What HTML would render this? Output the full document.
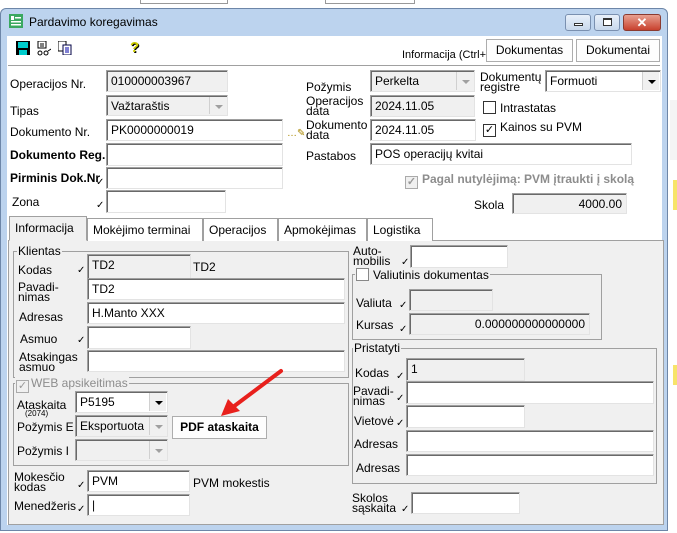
<!DOCTYPE html>
<html><head><meta charset="utf-8"><style>
*{box-sizing:border-box;margin:0;padding:0}
body{width:677px;height:533px;overflow:hidden;background:#fff;font-family:"Liberation Sans",Arial,sans-serif;font-size:12px;color:#000;position:relative}
.a{position:absolute;white-space:nowrap}
.in{position:absolute;background:#fff;border:1px solid #a0a0a0;border-right-color:#e3e3e3;border-bottom-color:#e3e3e3;box-shadow:inset 1px 1px 0 #696969;padding:2px 4px;font-size:12px;line-height:16px}
.g{background:#f0f0f0}
.dd{position:absolute;right:1px;top:1px;bottom:1px;width:17px;background:#f0f0f0;border-left:1px solid #d0d0d0}
.dd:after{content:"";position:absolute;left:5px;top:8px;border-left:4px solid transparent;border-right:4px solid transparent;border-top:4px solid #000}
.dd.d:after{border-top-color:#a0a0a0}
.l2{line-height:10px;font-size:12px}
.ck{position:absolute;font-size:10px}
.btn{position:absolute;background:#fdfdfd;border:1px solid #adadad;text-align:center;line-height:21px;font-size:12px}
.grp{position:absolute;border:1px solid #a0a0a0}
.gt{position:absolute;background:#f0f0f0;padding:0 1px}
.tab{position:absolute;top:218px;height:23px;border:1px solid #a0a0a0;border-bottom:none;background:#f0f0f0;line-height:22px;padding:0 5px;font-size:12px}
.cb{display:inline-block;width:13px;height:13px;border:1px solid #333;background:#fff;vertical-align:-2px;margin-right:4px;position:relative}
</style></head><body>
<div class="a" style="left:140px;top:0;width:88px;height:4px;border:1px solid #999;border-top:none"></div>
<div class="a" style="left:325px;top:0;width:90px;height:4px;border:1px solid #999;border-top:none"></div>
<!-- window frame -->
<div class="a" style="left:0;top:8px;width:668px;height:523px;background:#bcd3ee;border:1px solid #6d86a8;border-radius:6px 6px 0 0"></div>
<div class="a" style="left:668px;top:0;width:9px;height:533px;background:#fff"></div>
<div class="a" style="left:670px;top:100px;width:7px;height:60px;background:#f4f4f4"></div>
<div class="a" style="left:673px;top:180px;width:4px;height:30px;background:#f7e46a"></div>
<div class="a" style="left:673px;top:365px;width:4px;height:20px;background:#f7e46a"></div>
<svg class="a" style="left:9px;top:14px" width="14" height="14"><rect width="14" height="14" fill="#3aa860"/><rect x="2" y="2" width="3" height="4" fill="#fff"/><rect x="6" y="3" width="6" height="1.5" fill="#fff"/><rect x="2" y="7" width="10" height="1.5" fill="#fff"/><rect x="2" y="10" width="10" height="1.5" fill="#fff"/></svg>
<div class="a" style="left:29px;top:15px;font-size:12px">Pardavimo koregavimas</div>
<div class="a" style="left:565px;top:14px;width:26px;height:17px;border:1px solid #7a90b0;border-radius:3px;background:linear-gradient(#e8f0fa,#c8d8ec)"><div style="position:absolute;left:8px;top:8px;width:9px;height:3px;border:1px solid #333;background:#fff"></div></div>
<div class="a" style="left:594px;top:14px;width:26px;height:17px;border:1px solid #7a90b0;border-radius:3px;background:linear-gradient(#e8f0fa,#c8d8ec)"><div style="position:absolute;left:8px;top:3px;width:9px;height:8px;border:1px solid #333;border-top-width:2px;background:#fff"></div></div>
<div class="a" style="left:623px;top:14px;width:38px;height:17px;border:1px solid #8a3a30;border-radius:3px;background:linear-gradient(#e8a090,#c8412e);color:#fff;font-weight:bold;text-align:center;line-height:15px;font-size:13px">✕</div>
<!-- client area -->
<div class="a" style="left:7px;top:36px;width:655px;height:489px;background:#fff"></div>
<svg class="a" style="left:16px;top:41px" width="14" height="14"><rect width="14" height="14" fill="#000"/><rect x="2" y="1" width="10" height="6" fill="#0cc"/><rect x="3" y="9" width="8" height="5" fill="#0cc"/></svg>
<svg class="a" style="left:37px;top:41px" width="14" height="15"><rect x="1" y="0" width="8" height="7" fill="#fff" stroke="#000"/><path d="M3 3h4M3 5h4" stroke="#000"/><circle cx="3" cy="12" r="2" fill="none" stroke="#000"/><circle cx="9" cy="12" r="2" fill="none" stroke="#000"/><path d="M11 10l3-2" stroke="#000"/></svg>
<svg class="a" style="left:58px;top:41px" width="14" height="14"><rect x="0" y="0" width="8" height="10" fill="#fff" stroke="#000"/><rect x="5" y="4" width="8" height="10" fill="#fff" stroke="#004"/><path d="M7 7h4M7 9h4M7 11h4" stroke="#00a"/></svg>
<div class="a" style="left:130px;top:39px;font-weight:bold;color:#cc0;font-size:15px;text-shadow:1px 1px 0 #000">?</div>
<div class="a" style="left:402px;top:49px;font-size:11px">Informacija (Ctrl+J</div>
<div class="btn" style="left:486px;top:39px;width:87px;height:23px">Dokumentas</div>
<div class="btn" style="left:576px;top:39px;width:84px;height:23px">Dokumentai</div>
<div class="a" style="left:8px;top:65px;width:652px;height:1px;background:#a0a0a0"></div>

<div class="a" style="left:10px;top:77px">Operacijos Nr.</div>
<div class="in g" style="left:106px;top:70px;width:122px;height:22px">010000003967</div>
<div class="a" style="left:10px;top:104px">Tipas</div>
<div class="in g" style="left:106px;top:95px;width:122px;height:21px">Važtaraštis<div class="dd d"></div></div>
<div class="a" style="left:10px;top:125px">Dokumento Nr.</div>
<div class="in" style="left:106px;top:119px;width:177px;height:22px">PK0000000019</div>
<div class="a" style="left:287px;top:128px;font-size:10px;color:#a80">…✎</div>
<div class="a" style="left:10px;top:148px;font-weight:bold">Dokumento Reg.</div>
<div class="in" style="left:106px;top:143px;width:177px;height:23px"></div>
<div class="a" style="left:10px;top:171px;font-weight:bold">Pirminis Dok.Nr</div>
<div class="ck" style="left:96px;top:177px">✓</div>
<div class="in" style="left:106px;top:167px;width:177px;height:22px"></div>
<div class="a" style="left:12px;top:195px">Zona</div>
<div class="ck" style="left:96px;top:200px">✓</div>
<div class="in" style="left:106px;top:190px;width:120px;height:23px"></div>

<div class="a" style="left:306px;top:80px">Požymis</div>
<div class="in g" style="left:370px;top:70px;width:105px;height:22px">Perkelta<div class="dd d"></div></div>
<div class="a l2" style="left:306px;top:96px">Operacijos<br>data</div>
<div class="in g" style="left:370px;top:95px;width:105px;height:22px">2024.11.05</div>
<div class="a l2" style="left:306px;top:120px">Dokumento<br>data</div>
<div class="in" style="left:370px;top:119px;width:106px;height:22px">2024.11.05</div>
<div class="a" style="left:306px;top:149px">Pastabos</div>
<div class="in" style="left:370px;top:143px;width:262px;height:22px">POS operacijų kvitai</div>
<div class="a l2" style="left:480px;top:72px">Dokumentų<br>registre</div>
<div class="in" style="left:545px;top:70px;width:116px;height:22px">Formuoti<div class="dd"></div></div>
<div class="a" style="left:483px;top:101px"><span class="cb"></span>Intrastatas</div>
<div class="a" style="left:483px;top:120px"><span class="cb" style="text-align:center;font-size:11px;line-height:11px">✓</span>Kainos su PVM</div>
<div class="a" style="left:405px;top:172px;font-weight:bold;color:#8d8d8d"><span class="cb" style="border-color:#aaa;background:#f0f0f0;color:#999;text-align:center;font-size:11px;line-height:11px">✓</span>Pagal nutylėjimą: PVM įtraukti į skolą</div>
<div class="a" style="left:474px;top:198px">Skola</div>
<div class="in g" style="left:512px;top:193px;width:115px;height:21px;text-align:right">4000.00</div>

<!-- tabs -->
<div class="a" style="left:8px;top:240px;width:656px;height:285px;background:#f0f0f0;border:1px solid #a0a0a0"></div>
<div class="tab" style="left:9px;top:216px;height:25px;width:78px;border-bottom:1px solid #f0f0f0;background:#f0f0f0;z-index:2">Informacija</div>
<div class="tab" style="left:87px;width:116px;background:#fff">Mokėjimo terminai</div>
<div class="tab" style="left:203px;width:75px;background:#fff">Operacijos</div>
<div class="tab" style="left:278px;width:89px;background:#fff">Apmokėjimas</div>
<div class="tab" style="left:367px;width:66px;background:#fff">Logistika</div>

<div class="grp" style="left:13px;top:251px;width:336px;height:127px"></div>
<div class="gt" style="left:17px;top:244px">Klientas</div>
<div class="a" style="left:18px;top:263px">Kodas</div><div class="ck" style="left:77px;top:265px">✓</div>
<div class="in g" style="left:87px;top:254px;width:104px;height:25px">TD2</div>
<div class="a" style="left:193px;top:260px">TD2</div>
<div class="a l2" style="left:18px;top:282px">Pavadi-<br>nimas</div>
<div class="in" style="left:87px;top:278px;width:258px;height:22px">TD2</div>
<div class="a" style="left:19px;top:310px">Adresas</div>
<div class="in" style="left:87px;top:302px;width:258px;height:22px">H.Manto XXX</div>
<div class="a" style="left:20px;top:332px">Asmuo</div><div class="ck" style="left:77px;top:335px">✓</div>
<div class="in" style="left:87px;top:326px;width:104px;height:23px"></div>
<div class="a l2" style="left:19px;top:352px">Atsakingas<br>asmuo</div>
<div class="in" style="left:87px;top:350px;width:258px;height:22px"></div>

<div class="grp" style="left:13px;top:383px;width:336px;height:83px"></div>
<div class="gt" style="left:15px;top:376px;color:#8d8d8d"><span class="cb" style="border-color:#aaa;background:#f0f0f0;color:#999;text-align:center;font-size:11px;line-height:11px;margin-right:2px">✓</span>WEB apsikeitimas</div>
<div class="a" style="left:17px;top:398px">Ataskaita</div>
<div class="a" style="left:25px;top:409px;font-size:8px">(2074)</div>
<div class="in" style="left:75px;top:391px;width:93px;height:22px">P5195<div class="dd"></div></div>
<div class="a" style="left:17px;top:420px">Požymis E</div>
<div class="in g" style="left:75px;top:415px;width:93px;height:22px">Eksportuota<div class="dd d"></div></div>
<div class="btn" style="left:172px;top:416px;width:95px;height:23px;font-weight:bold">PDF ataskaita</div>
<div class="a" style="left:17px;top:444px">Požymis I</div>
<div class="in g" style="left:75px;top:439px;width:93px;height:22px"><div class="dd d"></div></div>

<div class="a l2" style="left:14px;top:472px">Mokesčio<br>kodas</div><div class="ck" style="left:77px;top:480px">✓</div>
<div class="in" style="left:87px;top:470px;width:103px;height:22px">PVM</div>
<div class="a" style="left:193px;top:476px">PVM mokestis</div>
<div class="a" style="left:14px;top:499px">Menedžeris</div><div class="ck" style="left:77px;top:504px">✓</div>
<div class="in" style="left:87px;top:494px;width:103px;height:22px">|</div>

<div class="a l2" style="left:353px;top:246px">Auto-<br>mobilis</div><div class="ck" style="left:401px;top:257px">✓</div>
<div class="in" style="left:410px;top:245px;width:98px;height:23px"></div>
<div class="grp" style="left:352px;top:274px;width:250px;height:66px"></div>
<div class="gt" style="left:355px;top:268px"><span class="cb" style="border-color:#888"></span>Valiutinis dokumentas</div>
<div class="a" style="left:356px;top:296px">Valiuta</div><div class="ck" style="left:399px;top:300px">✓</div>
<div class="in g" style="left:409px;top:289px;width:84px;height:22px"></div>
<div class="a" style="left:356px;top:318px">Kursas</div><div class="ck" style="left:399px;top:324px">✓</div>
<div class="in g" style="left:409px;top:313px;width:181px;height:22px;text-align:right">0.000000000000000</div>
<div class="grp" style="left:352px;top:348px;width:305px;height:136px"></div>
<div class="gt" style="left:353px;top:341px">Pristatyti</div>
<div class="a" style="left:355px;top:366px">Kodas</div><div class="ck" style="left:396px;top:371px">✓</div>
<div class="in g" style="left:406px;top:358px;width:119px;height:23px">1</div>
<div class="a l2" style="left:353px;top:386px">Pavadi-<br>nimas</div><div class="ck" style="left:396px;top:393px">✓</div>
<div class="in" style="left:406px;top:381px;width:248px;height:23px"></div>
<div class="a" style="left:354px;top:414px">Vietovė</div><div class="ck" style="left:396px;top:418px">✓</div>
<div class="in" style="left:406px;top:405px;width:119px;height:23px"></div>
<div class="a" style="left:354px;top:437px">Adresas</div>
<div class="in" style="left:406px;top:430px;width:248px;height:22px"></div>
<div class="a" style="left:356px;top:461px">Adresas</div>
<div class="in" style="left:406px;top:454px;width:248px;height:22px"></div>
<div class="a l2" style="left:352px;top:493px">Skolos<br>sąskaita</div><div class="ck" style="left:401px;top:504px">✓</div>
<div class="in" style="left:411px;top:492px;width:109px;height:22px"></div>

<svg class="a" style="left:0;top:0" width="677" height="533"><path d="M281 371 L233 407" stroke="#e8201c" stroke-width="4" stroke-linecap="round"/><path d="M221 416 L228 399 L240 411 Z" fill="#e8201c"/></svg>
</body></html>
